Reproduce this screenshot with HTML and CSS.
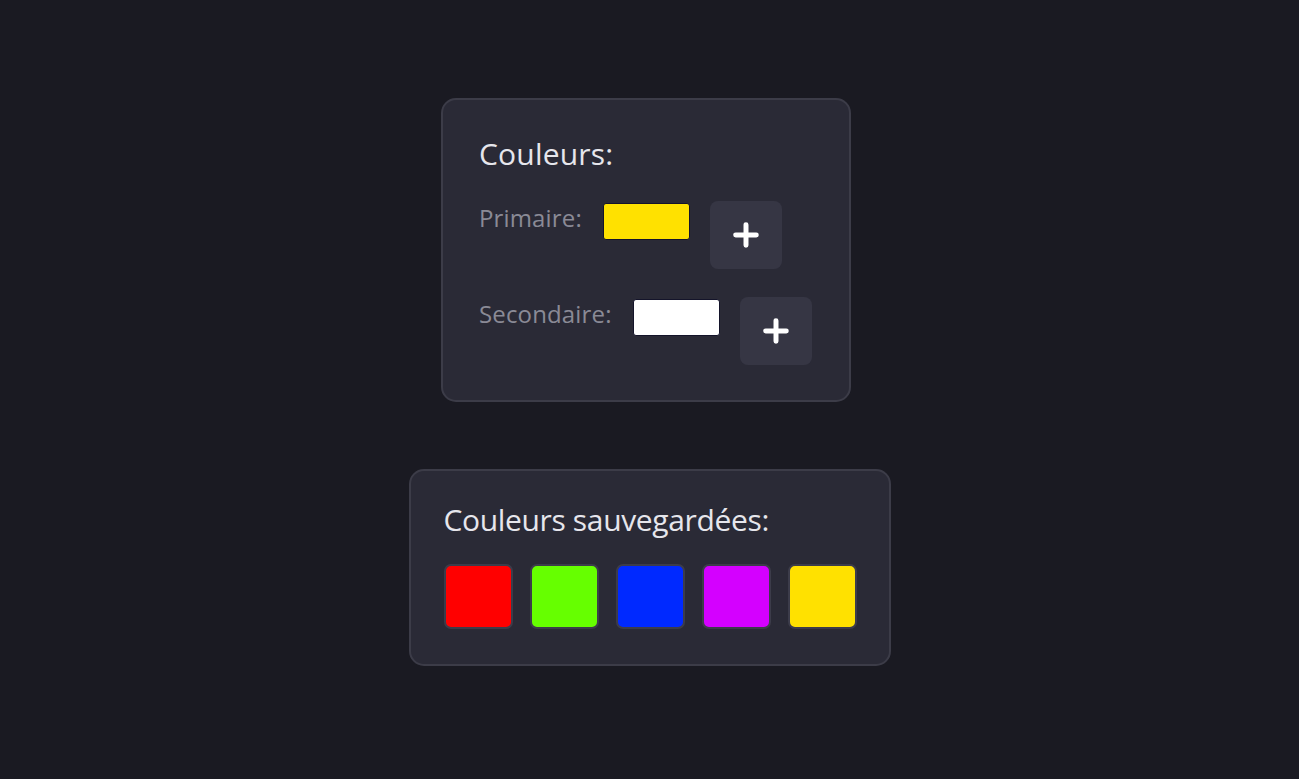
FILE: index.html
```html
<!DOCTYPE html>
<html lang="fr">
<head>
<meta charset="utf-8">
<title>Couleurs</title>
<link rel="stylesheet" href="styles.css">
</head>
<body>
<main class="page">
  <section class="card card-colors">
    <h2 class="card-title">Couleurs:</h2>
    <div class="color-row">
      <span class="color-label">Primaire:</span>
      <span class="color-swatch swatch-yellow"></span>
      <button class="add-btn" type="button" aria-label="Ajouter">
        <svg viewBox="0 0 24 24" width="26" height="26"><path d="M12 2.5v19M2.5 12h19" stroke="#fff" stroke-width="4.6" stroke-linecap="round" fill="none"/></svg>
      </button>
    </div>
    <div class="color-row">
      <span class="color-label">Secondaire:</span>
      <span class="color-swatch swatch-white"></span>
      <button class="add-btn" type="button" aria-label="Ajouter">
        <svg viewBox="0 0 24 24" width="26" height="26"><path d="M12 2.5v19M2.5 12h19" stroke="#fff" stroke-width="4.6" stroke-linecap="round" fill="none"/></svg>
      </button>
    </div>
  </section>

  <section class="card card-saved">
    <h2 class="card-title card-title-tight">Couleurs sauvegardées:</h2>
    <div class="saved-list">
      <span class="saved" style="background:#ff0000"></span>
      <span class="saved" style="background:#66ff00"></span>
      <span class="saved" style="background:#0029ff"></span>
      <span class="saved" style="background:#d400ff"></span>
      <span class="saved" style="background:#ffe100"></span>
    </div>
  </section>
</main>
</body>
</html>
```

FILE: styles.css
```css
* { box-sizing: border-box; }

html, body {
  margin: 0;
  padding: 0;
  background: #1a1a22;
  font-family: "Open Sans", "Noto Sans", sans-serif;
}

.page {
  min-height: 779px;
  display: flex;
  flex-direction: column;
  align-items: center;
  padding-top: 98px;
  gap: 67px;
}

.card {
  background: #2a2a36;
  border: 2px solid #3c3c48;
  border-radius: 15px;
}

.card-title {
  margin: 0;
  font-size: 30px;
  line-height: 36px;
  font-weight: 400;
  color: #e6e6ec;
  letter-spacing: 0.2px;
}

.card-title-tight {
  letter-spacing: -0.35px;
}

.card-colors {
  width: 410px;
  margin-right: 7px;
  padding: 36px 36px 35px 36px;
}

.color-row {
  display: flex;
  align-items: flex-start;
  margin-top: 29px;
}

.color-row + .color-row {
  margin-top: 28px;
}

.color-label {
  margin-top: 2px;
  font-size: 24px;
  line-height: 29px;
  color: #8a8a96;
  letter-spacing: 0.15px;
  margin-right: 21px;
}

.color-swatch {
  display: block;
  width: 87px;
  height: 37px;
  margin-top: 2px;
  border: 1px solid #14142a;
  border-radius: 3px;
  margin-right: 20px;
}

.swatch-yellow { background: #ffe100; }
.swatch-white { background: #ffffff; }

.add-btn {
  width: 72px;
  height: 68px;
  border: none;
  border-radius: 8px;
  background: #363644;
  display: flex;
  align-items: center;
  justify-content: center;
  padding: 0;
}

.add-btn svg { display: block; }

.card-saved {
  width: 482px;
  padding: 31px 32px 35px 33px;
}

.saved-list {
  display: flex;
  gap: 17px;
  margin-top: 26px;
}

.saved {
  display: block;
  flex: none;
  width: 69px;
  height: 65px;
  border: 2px solid #3c3c4a;
  border-radius: 7px;
}
```
